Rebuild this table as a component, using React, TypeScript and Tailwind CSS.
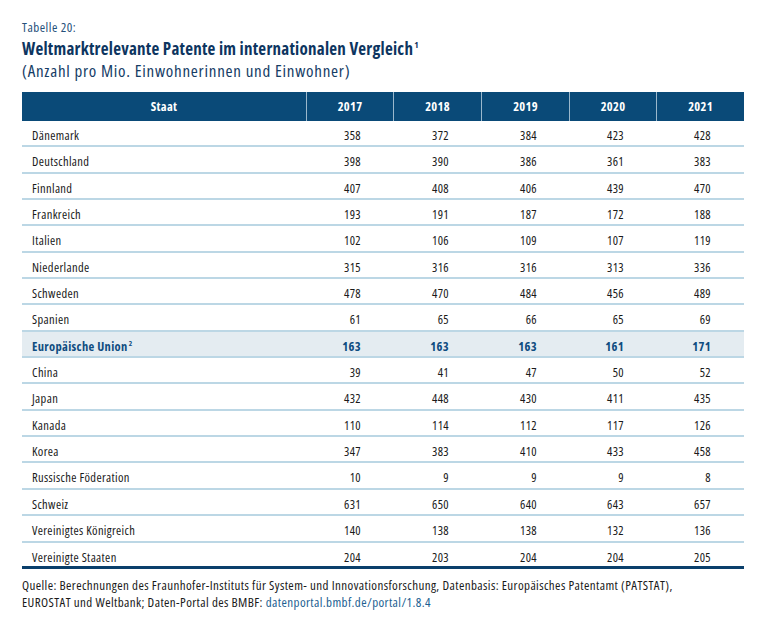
import React from 'react'

interface Row {
  name: string
  values: number[]
  highlight?: boolean
  sup?: string
}

const years = [2017, 2018, 2019, 2020, 2021]

const rows: Row[] = [
  { name: 'Dänemark', values: [358, 372, 384, 423, 428] },
  { name: 'Deutschland', values: [398, 390, 386, 361, 383] },
  { name: 'Finnland', values: [407, 408, 406, 439, 470] },
  { name: 'Frankreich', values: [193, 191, 187, 172, 188] },
  { name: 'Italien', values: [102, 106, 109, 107, 119] },
  { name: 'Niederlande', values: [315, 316, 316, 313, 336] },
  { name: 'Schweden', values: [478, 470, 484, 456, 489] },
  { name: 'Spanien', values: [61, 65, 66, 65, 69] },
  { name: 'Europäische Union', sup: '2', values: [163, 163, 163, 161, 171], highlight: true },
  { name: 'China', values: [39, 41, 47, 50, 52] },
  { name: 'Japan', values: [432, 448, 430, 411, 435] },
  { name: 'Kanada', values: [110, 114, 112, 117, 126] },
  { name: 'Korea', values: [347, 383, 410, 433, 458] },
  { name: 'Russische Föderation', values: [10, 9, 9, 9, 8] },
  { name: 'Schweiz', values: [631, 650, 640, 643, 657] },
  { name: 'Vereinigtes Königreich', values: [140, 138, 138, 132, 136] },
  { name: 'Vereinigte Staaten', values: [204, 203, 204, 204, 205] },
]

const cols = 'grid grid-cols-[285px_87px_88px_88px_87px_87px]'

const App: React.FC = () => {
  return (
    <div className="w-[766px] h-[630px] bg-white px-[22px] pt-[19px] font-['Open_Sans',sans-serif] font-stretch-condensed text-[#1a1a1a]">
      {/* Caption */}
      <div className="text-[13px] leading-[16px] tracking-[0.5px] text-[#24507a]">Tabelle 20:</div>
      <div className="mt-[3px] text-[17px] leading-[22px] font-bold tracking-[0.25px] text-[#0d3560]">
        Weltmarktrelevante Patente im internationalen Vergleich
        <sup className="text-[9px] -top-[7px] ml-[1px]">1</sup>
      </div>
      <div className="text-[17px] leading-[22px] tracking-[0.75px] text-[#163d66]">
        (Anzahl pro Mio. Einwohnerinnen und Einwohner)
      </div>

      {/* Table */}
      <div className="mt-[10px] w-[722px]">
        <div className={`${cols} h-[29px] bg-[#0a4a78] text-white text-[12.5px] tracking-[0.3px] font-bold`}>
          <div className="flex items-center justify-center pt-[2px] border-r border-[#9bb8cc]">Staat</div>
          {years.map((y, i) => (
            <div
              key={y}
              className={`flex items-center justify-center pt-[2px] ${i < years.length - 1 ? 'border-r border-[#9bb8cc]' : ''}`}
            >
              {y}
            </div>
          ))}
        </div>
        {rows.map((row, idx) => {
          const last = idx === rows.length - 1
          return (
            <div
              key={row.name}
              className={`${cols} h-[26.35px] text-[12.5px] tracking-[0.35px] ${
                last ? 'border-b-[3px] border-[#0a3f6b]' : 'border-b-2 border-[#bcd7e5]'
              } ${row.highlight ? 'bg-[#e4ecf1] text-[#0f4c80] font-bold' : ''}`}
            >
              <div className="flex items-center pl-[10px] pt-[6px]">
                {row.name}
                {row.sup && <sup className="text-[7.5px] -top-[4px] ml-[1px]">{row.sup}</sup>}
              </div>
              {row.values.map((v, i) => (
                <div key={i} className="flex items-center justify-end pr-[33px] pt-[6px]">
                  {v}
                </div>
              ))}
            </div>
          )
        })}
      </div>

      {/* Source */}
      <div className="mt-[8px] text-[13px] leading-[17px] tracking-[0.4px] text-[#1a1a1a]">
        <div>
          Quelle: Berechnungen des Fraunhofer-Instituts für System- und Innovationsforschung, Datenbasis: Europäisches
          Patentamt (PATSTAT),
        </div>
        <div>
          EUROSTAT und Weltbank; Daten-Portal des BMBF:{' '}
          <span className="text-[#1d5f92]">datenportal.bmbf.de/portal/1.8.4</span>
        </div>
      </div>
    </div>
  )
}

export default App
